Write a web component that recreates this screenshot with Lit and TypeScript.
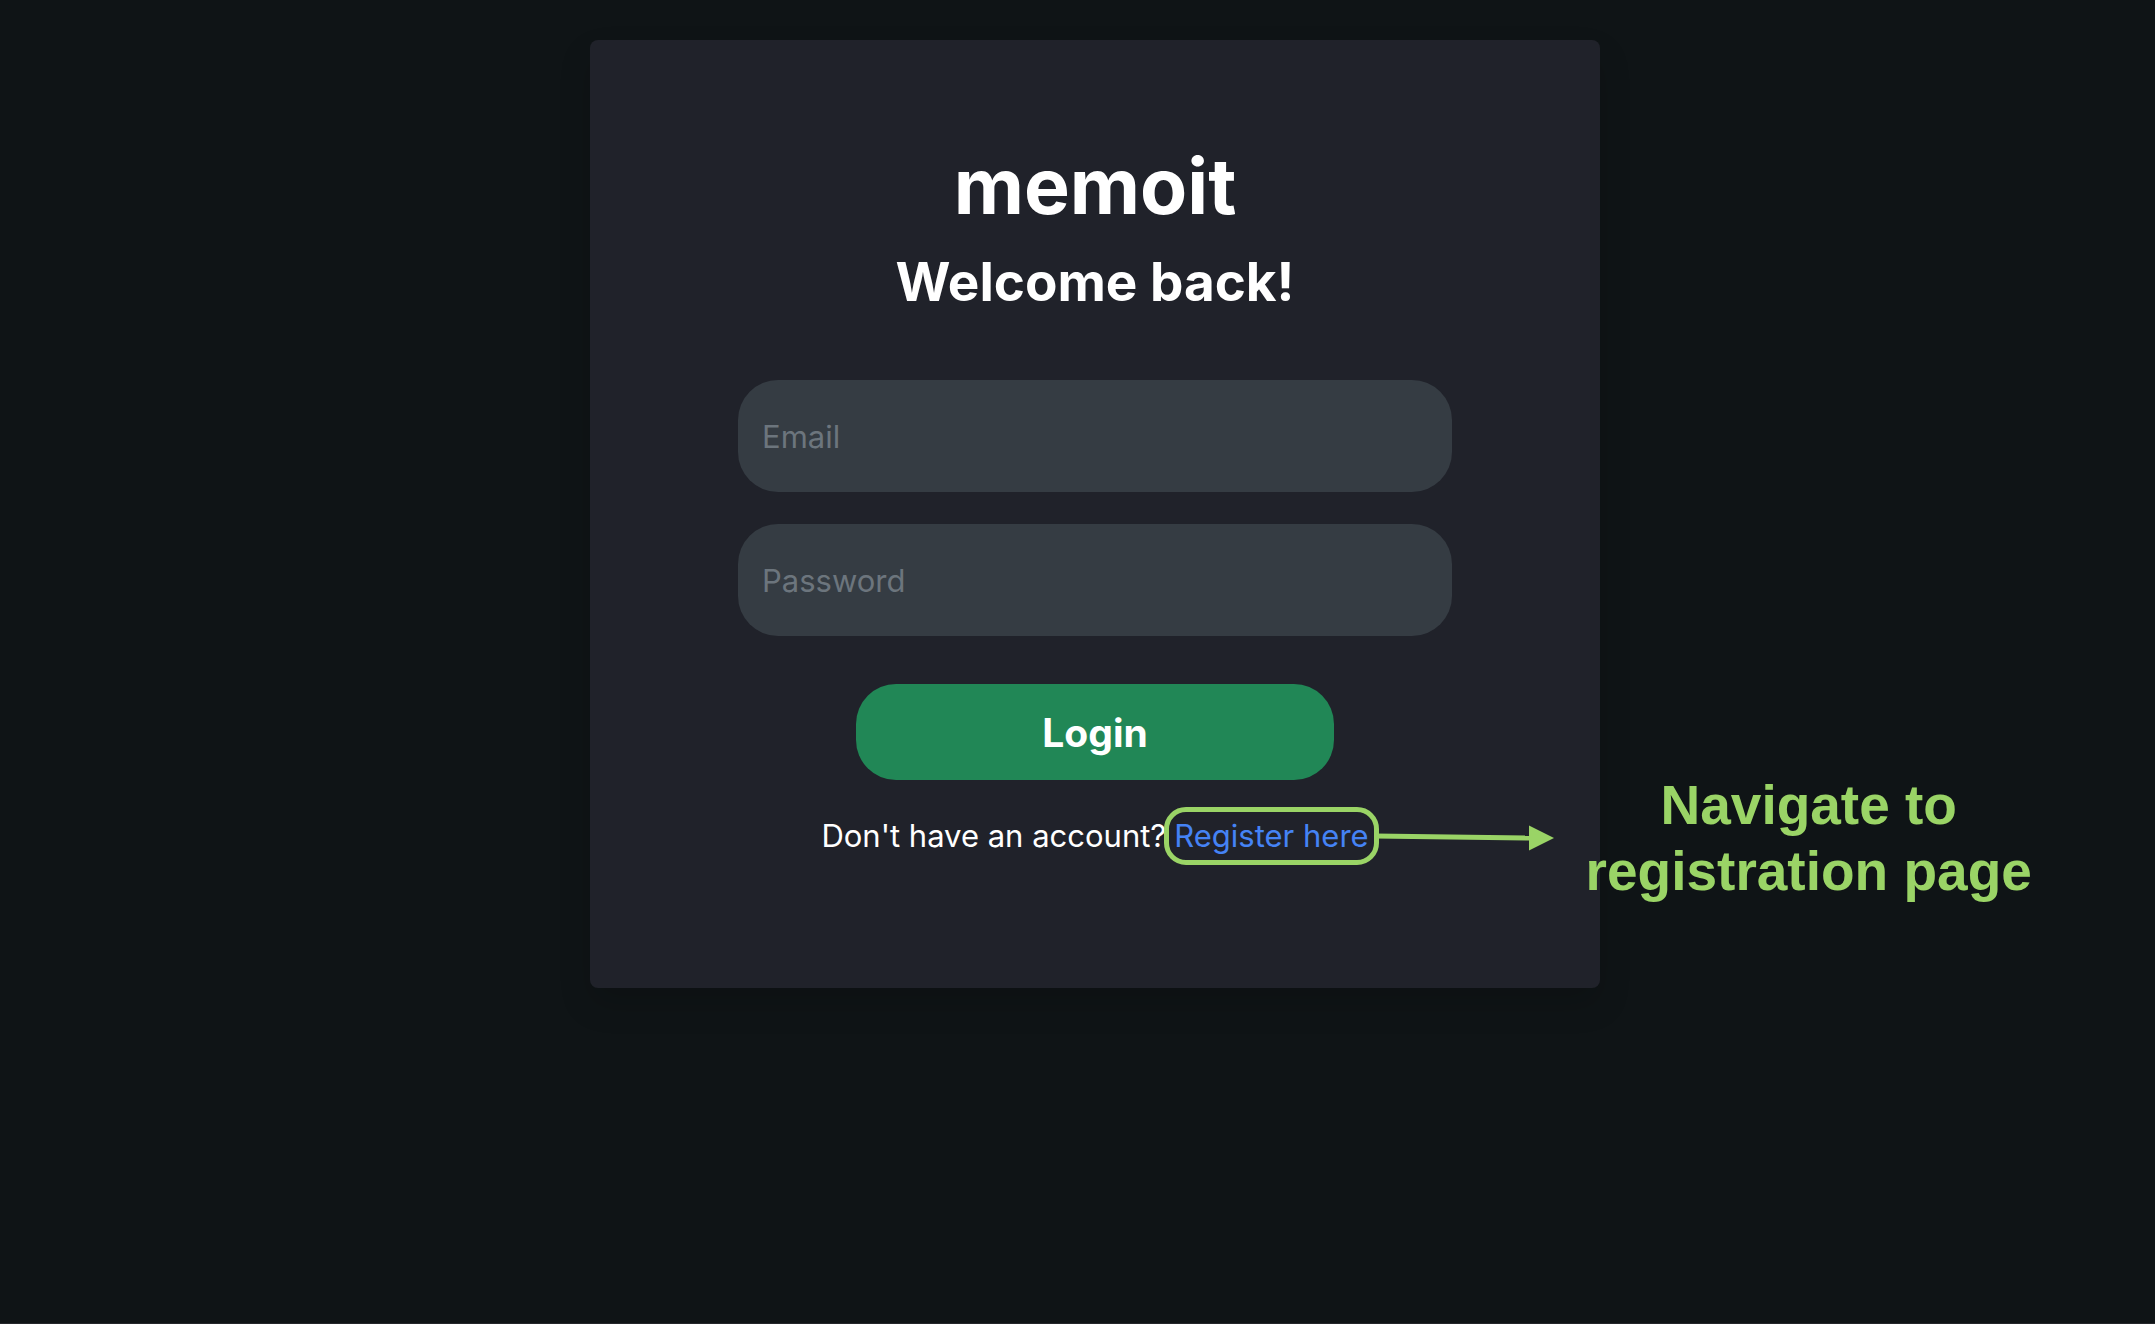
import { LitElement, html, css } from "lit";
import { customElement } from "lit/decorators.js";

@customElement("app-root")
export class AppRoot extends LitElement {
  static styles = css`
    :host {
      display: block;
      font-family: Inter, "Liberation Sans", sans-serif;
      color: #ffffff;
    }
    *,
    *::before {
      box-sizing: border-box;
    }
    .page {
      display: flex;
      justify-content: center;
      align-items: flex-start;
      min-height: 100vh;
      padding: 40px 0 40px 35px;
      background: #0f1416;
      border-bottom: 1px solid #25272b;
      overflow: hidden;
    }
    .card {
      display: flex;
      flex-direction: column;
      align-items: center;
      width: 100%;
      max-width: 1010px;
      padding: 98px 148px 128px;
      border-radius: 8px;
      background: #20222a;
      box-shadow: 0 16px 32px rgba(0, 0, 0, 0.15);
    }
    .brand,
    .welcome {
      margin: 0;
      font-weight: 700;
      text-align: center;
    }
    .brand {
      font-size: 77px;
      line-height: 96px;
    }
    .welcome {
      margin-top: 14px;
      font-size: 53px;
      line-height: 68px;
    }
    .form {
      display: flex;
      flex-direction: column;
      align-items: center;
      gap: 32px;
      width: 100%;
      margin-top: 64px;
    }
    .field {
      display: block;
      width: 100%;
      height: 112px;
      padding: 0 24px;
      border: 0;
      border-radius: 40px;
      outline: 0;
      background: #353c43;
      color: #ffffff;
      font: inherit;
      font-size: 31px;
    }
    .field::placeholder {
      color: #6c757d;
      opacity: 1;
    }
    .submit {
      width: 67%;
      height: 96px;
      margin-top: 16px;
      padding: 0;
      border: 0;
      border-radius: 40px;
      background: #218756;
      color: #ffffff;
      font: inherit;
      font-size: 39px;
      font-weight: 700;
      cursor: pointer;
    }
    .signup {
      display: flex;
      gap: 8px;
      margin: 32px 0 0;
      font-size: 31px;
      line-height: 48px;
      white-space: nowrap;
    }
    .target {
      position: relative;
    }
    .link {
      color: #4583f5;
      text-decoration: none;
    }
    .target::before {
      content: "";
      position: absolute;
      inset: -5px -10px;
      border: 5px solid #9ad466;
      border-radius: 22px;
      pointer-events: none;
    }
    .callout {
      position: absolute;
      left: calc(100% + 6px);
      top: -40px;
      display: flex;
      align-items: center;
      gap: 32px;
      color: #9ad466;
      pointer-events: none;
    }
    .arrow {
      display: block;
      width: 179px;
      height: 26px;
    }
    .note {
      font-family: "Liberation Sans", Arial, sans-serif;
      font-size: 55px;
      font-weight: 700;
      line-height: 66px;
      text-align: center;
    }
  `;

  render() {
    return html`
      <main class="page">
        <section class="card">
          <h1 class="brand">memoit</h1>
          <h2 class="welcome">Welcome back!</h2>
          <form class="form" @submit=${(e: Event) => e.preventDefault()}>
            <input class="field" type="email" placeholder="Email" aria-label="Email" />
            <input class="field" type="password" placeholder="Password" aria-label="Password" />
            <button class="submit" type="submit">Login</button>
          </form>
          <p class="signup">
            <span>Don't have an account?</span>
            <span class="target">
              <a class="link" href="#register">Register here</a>
              <span class="callout">
                <svg class="arrow" viewBox="0 0 179 26" aria-hidden="true">
                  <path d="M0 11L155 13" stroke="currentColor" stroke-width="5" />
                  <path d="M154 0.5L179 13L154 25.5Z" fill="currentColor" />
                </svg>
                <span class="note">Navigate to<br />registration page</span>
              </span>
            </span>
          </p>
        </section>
      </main>
    `;
  }
}
